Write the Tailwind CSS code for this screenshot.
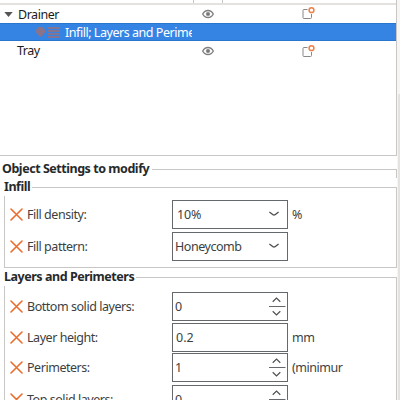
<!DOCTYPE html>
<html lang="en">
<head>
    <meta charset="UTF-8">
    <meta name="viewport" content="width=device-width, initial-scale=1.0">
    <title>Object Settings</title>
    <script src="https://cdn.jsdelivr.net/npm/@tailwindcss/browser@4"></script>
</head>
<body class="w-[400px] h-[400px] overflow-hidden bg-white font-['Noto_Sans',sans-serif] text-[12.5px] tracking-[-0.46px] text-[#3c3f41]">
    <!-- shared icons -->
    <svg class="hidden">
        <symbol id="eye" viewBox="0 0 12 10">
            <path d="M.7 5C3.2.3 8.8.3 11.3 5 8.8 9.7 3.2 9.7.7 5Z" fill="none" stroke="#808080" stroke-width="1.4"/>
            <circle cx="6" cy="5" r="1.8" fill="#777" stroke="#808080" stroke-width=".6"/>
        </symbol>
        <symbol id="edit" viewBox="0 0 13 13">
            <path d="M5.5 2.5H2Q1 2.5 1 3.5V10.5Q1 11.5 2 11.5H8.5Q9.5 11.5 9.5 10.5V7" fill="none" stroke="#888" stroke-width="1"/>
            <circle cx="9.5" cy="3.2" r="2.4" fill="#fff" stroke="#ed8048" stroke-width="1.5"/>
        </symbol>
        <symbol id="cross" viewBox="0 0 13 13">
            <path d="M1 1 12 12M12 1 1 12" fill="none" stroke="#e96d2b" stroke-width="1.6" stroke-linecap="round"/>
        </symbol>
        <symbol id="down" viewBox="0 0 10 6">
            <path d="M.4 1 4 3.7Q5 4.4 6 3.7L9.6 1" fill="none" stroke="#4d5052" stroke-width="1.4"/>
        </symbol>
        <symbol id="spin" viewBox="0 0 17 20">
            <path d="M3.7 5.7 7.5 2 11.3 5.7M3.7 15.3 7.5 19 11.3 15.3" fill="none" stroke="#4d5052" stroke-width="1.2"/>
            <path d="M0 10.5H16.5" stroke="#66696b" stroke-width="1"/>
        </symbol>
    </svg>

    <div class="flex h-[400px]">
        <div class="w-[397px] shrink-0">
            <!-- object list -->
            <div class="h-[156px] border-r border-b border-[#c9c7c5] text-[#1c1c1c]">
                <div class="h-[5px] border-b-2 border-[#e3e2e1] flex">
                    <div class="w-[194px] border-r border-[#c4c4c4]"></div>
                    <div class="w-[29px] border-r border-[#c4c4c4]"></div>
                </div>
                <div class="h-[18px] flex items-center">
                    <svg class="w-[9px] h-[5px] ml-1 mr-[5px]" viewBox="0 0 9 5"><path d="M.3 0H8.7L4.5 5Z" fill="#555"/></svg>
                    <span class="w-[184px] pt-0.5 leading-[18px]">Drainer</span>
                    <svg class="w-3 h-[10px] -mt-px"><use href="#eye"/></svg>
                    <svg class="w-[13px] h-[13px] ml-[88px] -mt-px"><use href="#edit"/></svg>
                </div>
                <div class="h-[18px] bg-[#3584e4] border-y border-[#2a76cf] flex items-center text-white">
                    <svg class="w-[26px] h-[12px] ml-[35px] mr-1" viewBox="0 0 26 12">
                        <path d="M3 1H8L11 5.5 6 11H5L0 5.5Z" fill="#84748f"/>
                        <path d="M2 4 7 9M4 2 9 7M2 7 7 2M4 9 9 4" stroke="#9a7078" stroke-width=".7"/>
                        <path d="M13 2H25M13 5H25M13 8H25M13 11H25" stroke="#84748f" stroke-width="1.8"/>
                    </svg>
                    <span class="w-[127px] pt-0.5 overflow-hidden whitespace-nowrap leading-[18px]">Infill; Layers and Perimeters</span>
                </div>
                <div class="h-[20px] flex items-center">
                    <span class="w-[184px] ml-[17px] mr-px leading-[20px]">Tray</span>
                    <svg class="w-3 h-[10px] -mt-px"><use href="#eye"/></svg>
                    <svg class="w-[13px] h-[13px] ml-[88px]"><use href="#edit"/></svg>
                </div>
            </div>

            <!-- settings -->
            <div class="h-[22px] pl-[2px] flex items-end font-bold text-[#26292b]">
                <span class="w-[150px] shrink-0 whitespace-nowrap leading-[18px]">Object Settings to modify</span>
                <div class="grow h-[9px] border-t border-r border-[#c9c7c5]"></div>
            </div>
            <div class="h-[18px] pl-1 flex items-end font-bold text-[#26292b]">
                <span class="w-7 shrink-0 whitespace-nowrap leading-[18px]">Infill</span>
                <div class="grow h-[9px] border-t border-r border-[#c9c7c5]"></div>
            </div>
            <div class="h-[72px] ml-1 pt-1 border-x border-b border-[#c9c7c5] flex flex-col gap-[3px]">
                <div class="h-[29px] pl-[5px] flex items-center">
                    <svg class="w-[13px] h-[13px] mr-[4px] -mt-px"><use href="#cross"/></svg>
                    <span class="w-[145px] pt-0.5">Fill density:</span>
                    <div class="w-[116px] h-[29px] border border-[#66696b] pl-[4px] pr-[8px] flex items-center justify-between">
                        <span class="tracking-[-0.2px] pt-0.5">10%</span>
                        <svg class="w-[10px] h-[6px] -mt-px"><use href="#down"/></svg>
                    </div>
                    <span class="ml-1 pt-0.5">%</span>
                </div>
                <div class="h-[29px] pl-[5px] flex items-center">
                    <svg class="w-[13px] h-[13px] mr-[4px] -mt-px"><use href="#cross"/></svg>
                    <span class="w-[145px] pt-0.5">Fill pattern:</span>
                    <div class="w-[116px] h-[29px] border border-[#66696b] pl-[2px] pr-[8px] flex items-center justify-between">
                        <span class="pt-0.5">Honeycomb</span>
                        <svg class="w-[10px] h-[6px] -mt-px"><use href="#down"/></svg>
                    </div>
                </div>
            </div>

            <div class="h-[18px] pl-1 flex items-end font-bold text-[#26292b]">
                <span class="w-[132px] shrink-0 whitespace-nowrap leading-[18px]">Layers and Perimeters</span>
                <div class="grow h-[9px] border-t border-r border-[#c9c7c5]"></div>
            </div>
            <div class="h-[114px] overflow-hidden ml-1 pt-[6px] border-x border-[#c9c7c5]">
                <div class="h-[29px] pl-[5px] flex items-center">
                    <svg class="w-[13px] h-[13px] mr-[4px] -mt-px"><use href="#cross"/></svg>
                    <span class="w-[145px] pt-0.5">Bottom solid layers:</span>
                    <div class="w-[116px] h-[29px] border border-[#66696b] pl-[2px] pr-[1px] flex items-center justify-between">
                        <span class="pt-0.5">0</span>
                        <svg class="w-[17px] h-5 -mt-px"><use href="#spin"/></svg>
                    </div>
                </div>
                <div class="h-[29px] mt-[2px] pl-[5px] flex items-center">
                    <svg class="w-[13px] h-[13px] mr-[4px] -mt-px"><use href="#cross"/></svg>
                    <span class="w-[145px] pt-0.5">Layer height:</span>
                    <div class="w-[116px] h-[29px] border border-[#66696b] pl-[3px] flex items-center">
                        <span class="tracking-normal pt-0.5">0.2</span>
                    </div>
                    <span class="ml-1 pt-0.5">mm</span>
                </div>
                <div class="h-[29px] mt-px pl-[5px] flex items-center">
                    <svg class="w-[13px] h-[13px] mr-[4px] -mt-px"><use href="#cross"/></svg>
                    <span class="w-[145px] pt-0.5">Perimeters:</span>
                    <div class="w-[116px] h-[29px] border border-[#66696b] pl-[2px] pr-[1px] flex items-center justify-between">
                        <span class="pt-0.5">1</span>
                        <svg class="w-[17px] h-5 -mt-px"><use href="#spin"/></svg>
                    </div>
                    <span class="ml-1 pt-0.5">(minimur</span>
                </div>
                <div class="h-[29px] mt-[3px] pl-[5px] flex items-center">
                    <svg class="w-[13px] h-[13px] mr-[4px] -mt-px"><use href="#cross"/></svg>
                    <span class="w-[145px] pt-0.5">Top solid layers:</span>
                    <div class="w-[116px] h-[29px] border border-[#66696b] pl-[2px] pr-[1px] flex items-center justify-between">
                        <span class="pt-0.5">0</span>
                        <svg class="w-[17px] h-5 -mt-px"><use href="#spin"/></svg>
                    </div>
                </div>
            </div>
        </div>
        <!-- scrollbar edge -->
        <div class="grow bg-[#f6f5f4] pt-[94px] flex justify-end">
            <div class="w-[2px] bg-[#e4e3e2]"></div>
        </div>
    </div>
</body>
</html>
